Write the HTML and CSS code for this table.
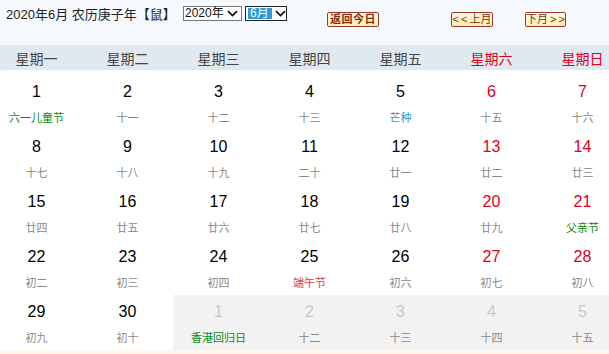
FILE: index.html
```html
<!DOCTYPE html>
<html lang="zh-CN">
<head>
<meta charset="utf-8">
<title>万年历</title>
<link rel="stylesheet" href="styles.css">
</head>
<body>
<div class="top">
  <div class="title">2020年6月 农历庚子年【鼠】</div>
  <div class="sel sel-year"><span class="sel-text">2020年</span><svg class="chev" width="11" height="7" viewBox="0 0 11 7"><path d="M1 1.2 L5.5 5.6 L10 1.2" fill="none" stroke="#111" stroke-width="1.7"/></svg></div>
  <div class="sel sel-month"><span class="sel-text hl">6月</span><svg class="chev" width="11" height="7" viewBox="0 0 11 7"><path d="M1 1.2 L5.5 5.6 L10 1.2" fill="none" stroke="#111" stroke-width="1.7"/></svg></div>
  <div class="btn btn-today">返回今日</div>
  <div class="btn btn-prev">&lt; &lt; 上月</div>
  <div class="btn btn-next">下月 &gt; &gt;</div>
</div>
<div class="cal">
  <div class="week">
    <div>星期一</div><div>星期二</div><div>星期三</div><div>星期四</div><div>星期五</div><div class="we">星期六</div><div class="we">星期日</div>
  </div>
  <div class="days">
    <div class="cell"><div class="d">1</div><div class="l fest">六一儿童节</div></div>
    <div class="cell"><div class="d">2</div><div class="l">十一</div></div>
    <div class="cell"><div class="d">3</div><div class="l">十二</div></div>
    <div class="cell"><div class="d">4</div><div class="l">十三</div></div>
    <div class="cell"><div class="d">5</div><div class="l term">芒种</div></div>
    <div class="cell we"><div class="d">6</div><div class="l">十五</div></div>
    <div class="cell we"><div class="d">7</div><div class="l">十六</div></div>

    <div class="cell"><div class="d">8</div><div class="l">十七</div></div>
    <div class="cell"><div class="d">9</div><div class="l">十八</div></div>
    <div class="cell"><div class="d">10</div><div class="l">十九</div></div>
    <div class="cell"><div class="d">11</div><div class="l">二十</div></div>
    <div class="cell"><div class="d">12</div><div class="l">廿一</div></div>
    <div class="cell we"><div class="d">13</div><div class="l">廿二</div></div>
    <div class="cell we"><div class="d">14</div><div class="l">廿三</div></div>

    <div class="cell"><div class="d">15</div><div class="l">廿四</div></div>
    <div class="cell"><div class="d">16</div><div class="l">廿五</div></div>
    <div class="cell"><div class="d">17</div><div class="l">廿六</div></div>
    <div class="cell"><div class="d">18</div><div class="l">廿七</div></div>
    <div class="cell"><div class="d">19</div><div class="l">廿八</div></div>
    <div class="cell we"><div class="d">20</div><div class="l">廿九</div></div>
    <div class="cell we"><div class="d">21</div><div class="l fest">父亲节</div></div>

    <div class="cell"><div class="d">22</div><div class="l">初二</div></div>
    <div class="cell"><div class="d">23</div><div class="l">初三</div></div>
    <div class="cell"><div class="d">24</div><div class="l">初四</div></div>
    <div class="cell"><div class="d">25</div><div class="l hol">端午节</div></div>
    <div class="cell"><div class="d">26</div><div class="l">初六</div></div>
    <div class="cell we"><div class="d">27</div><div class="l">初七</div></div>
    <div class="cell we"><div class="d">28</div><div class="l">初八</div></div>

    <div class="cell"><div class="d">29</div><div class="l">初九</div></div>
    <div class="cell"><div class="d">30</div><div class="l">初十</div></div>
    <div class="cell other"><div class="d">1</div><div class="l fest">香港回归日</div></div>
    <div class="cell other"><div class="d">2</div><div class="l">十二</div></div>
    <div class="cell other"><div class="d">3</div><div class="l">十三</div></div>
    <div class="cell other"><div class="d">4</div><div class="l">十四</div></div>
    <div class="cell other"><div class="d">5</div><div class="l">十五</div></div>
  </div>
</div>
</body>
</html>
```
FILE: styles.css
```css
html {
  background: #fdf6ea;
}
body {
  margin: 0;
  width: 609px;
  height: 354px;
  overflow: hidden;
  font-family: "Liberation Sans", "Noto Sans CJK SC", sans-serif;
  color: #222;
}
.top {
  height: 45px;
  background: #f5f9fd;
  display: flex;
  align-items: flex-start;
  padding-left: 6px;
  box-sizing: border-box;
}
.title {
  font-size: 13px;
  line-height: 16px;
  margin-top: 7px;
  color: #222;
  white-space: nowrap;
  width: 177px;
}
.sel {
  margin-top: 6px;
  height: 15px;
  box-sizing: border-box;
  border: 1px solid #767676;
  background: #fff;
  display: flex;
  align-items: center;
  font-size: 12px;
  line-height: 13px;
}
.sel-year {
  width: 59px;
  padding-left: 1px;
}
.sel-month {
  width: 42px;
  margin-left: 3px;
  border-color: #222;
  padding-left: 2px;
}
.sel-text {
  flex: 1;
  color: #111;
}
.sel-text.hl {
  flex: 0 0 24px;
  background: #2e9ad8;
  color: #fff;
  padding-left: 2px;
  box-sizing: border-box;
  height: 11px;
  line-height: 11px;
}
.sel-month .chev {
  margin-left: 3px;
}
.chev {
  margin-right: 3px;
  flex: none;
}
.btn {
  margin-top: 12px;
  height: 15px;
  box-sizing: border-box;
  border: 1px solid #9a3a2e;
  border-radius: 2px;
  background: linear-gradient(#fffbe8, #ffeeb0);
  color: #8a2a10;
  font-size: 11px;
  line-height: 13px;
  text-align: center;
  white-space: nowrap;
  word-spacing: -1px;
}
.btn-today {
  width: 52px;
  margin-left: 40px;
  font-weight: bold;
  letter-spacing: 0.5px;
}
.btn-prev {
  width: 42px;
  margin-left: 72px;
}
.btn-next {
  width: 41px;
  margin-left: 32px;
}
.cal {
  margin-left: -9px;
  width: 637px;
  background: #fff;
}
.week {
  display: grid;
  grid-template-columns: repeat(7, 91px);
  height: 25px;
  background: #e1e9f0;
  font-size: 14px;
  line-height: 25px;
  color: #444;
  text-align: center;
}
.week > div {
  padding-top: 2px;
}
.week .we {
  color: #e0001b;
}
.days {
  display: grid;
  grid-template-columns: repeat(7, 91px);
  grid-auto-rows: 55px;
  padding-top: 5px;
}
.cell {
  text-align: center;
  padding-top: 8px;
  box-sizing: border-box;
}
.d {
  font-size: 16px;
  line-height: 18px;
  color: #000;
}
.l {
  margin-top: 10px;
  font-size: 11px;
  line-height: 14px;
  color: #888;
}
.cell.we .d {
  color: #e0001b;
}
.l.fest {
  color: #0a8a0a;
}
.l.term {
  color: #2f94d0;
}
.l.hol {
  color: #e23a3a;
}
.cell.other {
  background: #f2f2f2;
}
.cell.other .d {
  color: #c8c8c8;
}
```
